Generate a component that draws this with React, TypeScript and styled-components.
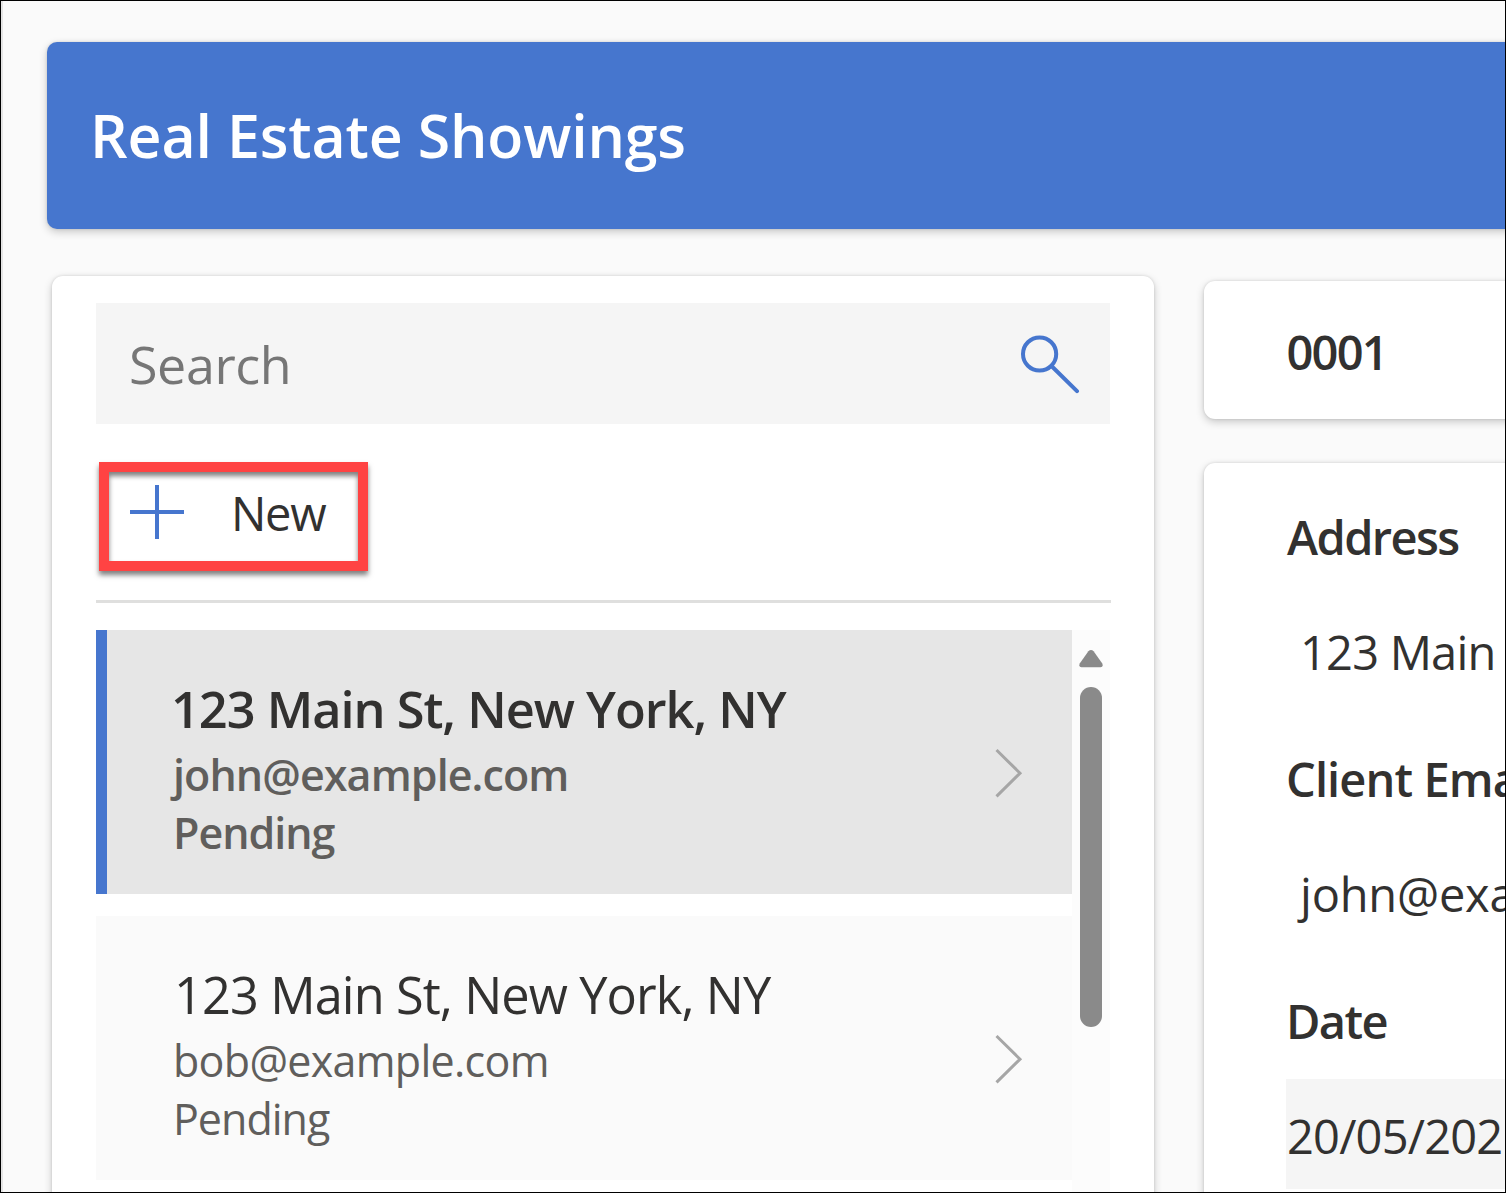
import React from "react";
import styled, { createGlobalStyle } from "styled-components";

const blue = "#4676ce";
const ink = "#323130";
const cardShadow = "0 3px 8px rgba(0, 0, 0, 0.2), 0 0 3px rgba(0, 0, 0, 0.12)";

const GlobalStyle = createGlobalStyle`
  *, *::before, *::after { box-sizing: border-box; }
  body { margin: 0; overflow: hidden; background: #fafafa; }
`;

const Frame = styled.div`
  display: flex;
  width: 1506px;
  height: 1193px;
  overflow: hidden;
  border: 1px solid #000;
  background: #fafafa;
  font-family: "Open Sans", "Noto Sans", sans-serif;
  color: ${ink};
`;

const EdgeStrip = styled.div`
  flex: 0 0 2px;
  background: #e4e4e4;
`;

const Screen = styled.div`
  flex: 1;
  min-width: 0;
  display: flex;
  flex-direction: column;
  padding: 41px 0 0 44px;
`;

const Header = styled.header`
  flex: 0 0 187px;
  width: 1500px;
  display: flex;
  align-items: center;
  padding: 0 0 2px 43px;
  border-radius: 10px;
  background: ${blue};
  box-shadow: ${cardShadow};
`;

const Text = styled.span<{
  $size: number;
  $line: number;
  $weight?: number;
  $track?: number;
  $color?: string;
  $indent?: number;
}>`
  display: block;
  white-space: nowrap;
  font-size: ${(p) => p.$size}px;
  line-height: ${(p) => p.$line}px;
  font-weight: ${(p) => p.$weight ?? 400};
  letter-spacing: ${(p) => p.$track ?? 0}px;
  color: ${(p) => p.$color ?? ink};
  padding-left: ${(p) => p.$indent ?? 0}px;
`;

const Title = styled(Text)`
  margin: 0;
`;

const Columns = styled.main`
  flex: 1;
  display: flex;
  gap: 50px;
  padding: 47px 0 0 5px;
`;

const Card = styled.section`
  background: #fff;
  border-radius: 11px;
  box-shadow: ${cardShadow};
`;

const ListCard = styled(Card)`
  flex: 0 0 1102px;
  width: 1102px;
  height: 960px;
  padding: 27px 44px 0;
`;

const SearchBox = styled.div`
  width: 1014px;
  height: 121px;
  display: flex;
  align-items: center;
  justify-content: space-between;
  padding: 0 30px 0 33px;
  background: #f5f5f5;
`;

const NewButton = styled.div`
  width: 269px;
  height: 109px;
  margin: 38px 0 0 3px;
  display: flex;
  align-items: flex-start;
  gap: 47px;
  padding: 13px 0 0 21px;
  border: 10px solid #ff4343;
  box-shadow: 0 4px 5px rgba(0, 0, 0, 0.5), inset 0 4px 5px rgba(0, 0, 0, 0.5);
`;

const NewLabel = styled(Text)`
  margin-top: -4px;
`;

const Divider = styled.div`
  height: 3px;
  margin: 29px -1px 27px 0;
  background: #dfdfde;
`;

const Gallery = styled.div`
  display: flex;
  height: 600px;
`;

const Items = styled.div`
  flex: 1;
  display: flex;
  flex-direction: column;
  gap: 22px;
`;

const Item = styled.article<{ $selected?: boolean }>`
  height: 264px;
  display: flex;
  justify-content: space-between;
  padding: 43px 49px 0 ${(p) => (p.$selected ? 66 : 77)}px;
  border-left: ${(p) => (p.$selected ? 11 : 0)}px solid ${blue};
  background: ${(p) => (p.$selected ? "#e6e6e6" : "#fafafa")};
`;

const ItemText = styled.div`
  display: flex;
  flex-direction: column;
`;

const Address = styled(Text)<{ $shift: number }>`
  margin-left: ${(p) => p.$shift}px;
`;

const ChevronSlot = styled.div`
  padding-top: 75px;
`;

const Scrollbar = styled.div`
  flex: 0 0 38px;
  display: flex;
  flex-direction: column;
  align-items: center;
  gap: 19px;
  padding-top: 20px;
  background: #fcfcfc;
`;

const Thumb = styled.div`
  width: 22px;
  height: 340px;
  border-radius: 11px;
  background: #8a8a8a;
`;

const Detail = styled.div`
  flex: 0 0 400px;
  display: flex;
  flex-direction: column;
  gap: 44px;
  padding-top: 5px;
`;

const NumberCard = styled(Card)`
  height: 138px;
  display: flex;
  align-items: center;
  padding: 4px 0 0 82px;
`;

const FormCard = styled(Card)`
  height: 760px;
  padding: 42px 0 0 82px;
`;

const Field = styled.div`
  height: 242px;
`;

const Value = styled.div<{ $filled?: boolean }>`
  height: 110px;
  margin-top: 26px;
  padding-top: 3px;
  display: flex;
  align-items: center;
  background: ${(p) => (p.$filled ? "#f5f5f5" : "transparent")};
`;

const SearchIcon = () => (
  <svg width="60" height="60" viewBox="0 0 60 60" fill="none" stroke={blue} strokeWidth="4">
    <circle cx="19.6" cy="20" r="16.6" />
    <path d="M31.5 32 57 57.2" strokeLinecap="round" />
  </svg>
);

const PlusIcon = () => (
  <svg width="54" height="54" viewBox="0 0 54 54" stroke={blue} strokeWidth="4">
    <path d="M27 0V54M0 27H54" />
  </svg>
);

const Chevron = () => (
  <svg width="28" height="50" viewBox="0 0 28 50" fill="none" stroke="#a6a6a6" strokeWidth="3">
    <path d="M1.5 2 25 25.2 1.5 48.4" />
  </svg>
);

const UpArrow = () => (
  <svg width="24" height="18" viewBox="0 0 24 18" fill="#8a8a8a">
    <path d="M9.4 1.3Q12-1.2 14.6 1.3L23.3 13.6Q24.5 17 21.5 17.3H2.5Q-.5 17 .7 13.6Z" />
  </svg>
);

const showings = [
  { address: "123 Main St, New York, NY", email: "john@example.com", status: "Pending", selected: true },
  { address: "123 Main St, New York, NY", email: "bob@example.com", status: "Pending", selected: false },
];

export default function App() {
  return (
    <>
      <GlobalStyle />
      <Frame>
        <EdgeStrip />
        <Screen>
          <Header>
            <Title as="h1" $size={59} $line={80} $weight={600} $track={-0.15} $color="#fff">
              Real Estate Showings
            </Title>
          </Header>
          <Columns>
            <ListCard>
              <SearchBox>
                <Text $size={52} $line={72} $track={-0.4} $color="#767676">Search</Text>
                <SearchIcon />
              </SearchBox>
              <NewButton>
                <PlusIcon />
                <NewLabel $size={47} $line={64} $track={-1.3}>New</NewLabel>
              </NewButton>
              <Divider />
              <Gallery>
                <Items>
                  {showings.map((s) => {
                    const weight = s.selected ? 600 : 400;
                    return (
                      <Item key={s.email} $selected={s.selected}>
                        <ItemText>
                          <Address
                            $size={50.5}
                            $line={71}
                            $weight={weight}
                            $track={s.selected ? -1.02 : -0.9}
                            $shift={s.selected ? -2 : 1}
                          >
                            {s.address}
                          </Address>
                          <Text $size={43} $line={61} $weight={weight} $track={s.selected ? -0.9 : -0.7} $color="#605e5c">
                            {s.email}
                          </Text>
                          <Text $size={43} $line={56} $weight={weight} $track={-1} $color="#605e5c">
                            {s.status}
                          </Text>
                        </ItemText>
                        <ChevronSlot>
                          <Chevron />
                        </ChevronSlot>
                      </Item>
                    );
                  })}
                </Items>
                <Scrollbar>
                  <UpArrow />
                  <Thumb />
                </Scrollbar>
              </Gallery>
            </ListCard>
            <Detail>
              <NumberCard>
                <Text $size={47} $line={64} $weight={600} $track={-1.8} $indent={0.5}>0001</Text>
              </NumberCard>
              <FormCard>
                <Field>
                  <Text $size={47} $line={64} $weight={600} $track={-1.6} $indent={1}>Address</Text>
                  <Value>
                    <Text $size={47} $line={64} $track={-0.8} $indent={14}>123 Main</Text>
                  </Value>
                </Field>
                <Field>
                  <Text $size={47} $line={64} $weight={600} $track={-0.9}>Client Email</Text>
                  <Value>
                    <Text $size={47} $line={64} $track={-0.2} $indent={14}>john@example.com</Text>
                  </Value>
                </Field>
                <Field>
                  <Text $size={47} $line={64} $weight={600} $track={-1.6}>Date</Text>
                  <Value $filled>
                    <Text $size={47} $line={64} $track={-0.8} $indent={1}>20/05/202</Text>
                  </Value>
                </Field>
              </FormCard>
            </Detail>
          </Columns>
        </Screen>
      </Frame>
    </>
  );
}
